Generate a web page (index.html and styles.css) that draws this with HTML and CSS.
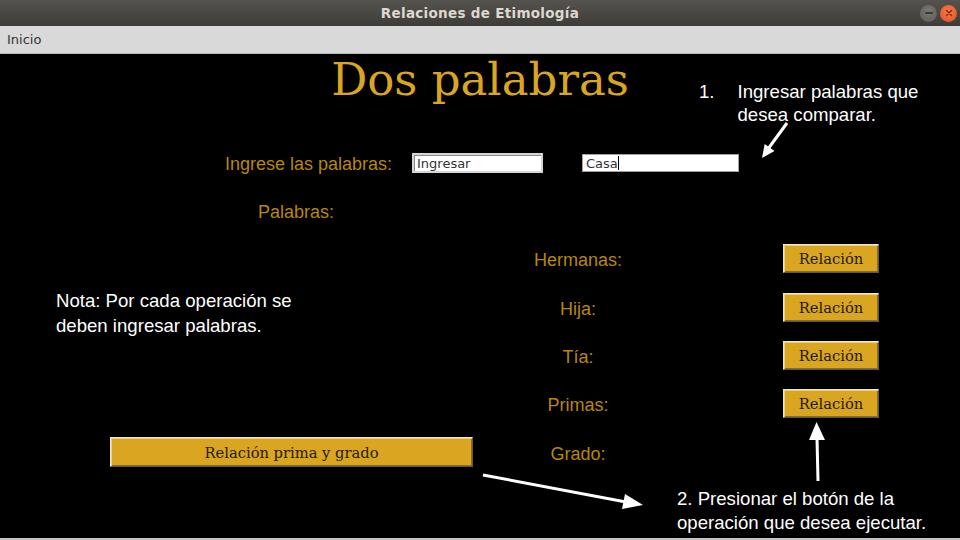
FILE: index.html
```html
<!DOCTYPE html>
<html lang="es">
<head>
<meta charset="utf-8">
<title>Relaciones de Etimología</title>
<link rel="stylesheet" href="styles.css">
</head>
<body>
<div class="window">
  <header class="titlebar">
    <span></span>
    <span class="win-title">Relaciones de Etimología</span>
    <div class="controls">
      <span class="ctl ctl-min"></span>
      <span class="ctl ctl-close">
        <svg width="8" height="8" viewBox="0 0 8 8"><path d="M1.5 1.5 L6.5 6.5 M6.5 1.5 L1.5 6.5" stroke="#8a2a0c" stroke-width="1.4" stroke-linecap="round"/></svg>
      </span>
    </div>
  </header>
  <nav class="menubar"><span class="menu-item">Inicio</span></nav>
  <main class="canvas">
    <h1 class="heading">Dos palabras</h1>
    <div class="entry-row">
      <span class="lbl-text">Ingrese las palabras:</span>
      <div class="entry entry-first">Ingresar</div>
      <div class="entry entry-second">Casa<span class="caret"></span></div>
    </div>
    <div class="words-row"><span class="lbl-text">Palabras:</span></div>
    <div class="rel-grid">
      <span class="lbl-text rel-lbl">Hermanas:</span>
      <button class="rel-btn">Relación</button>
      <span class="lbl-text rel-lbl">Hija:</span>
      <button class="rel-btn">Relación</button>
      <span class="lbl-text rel-lbl">Tía:</span>
      <button class="rel-btn">Relación</button>
      <span class="lbl-text rel-lbl">Primas:</span>
      <button class="rel-btn">Relación</button>
      <button class="big-btn">Relación prima y grado</button>
      <span class="lbl-text rel-lbl">Grado:</span>
    </div>

    <div class="note note-one">
      <span class="num">1.</span>
      <span class="note-body">Ingresar palabras que<br>desea comparar.</span>
    </div>
    <div class="note note-nota">Nota: Por cada operación se<br>deben ingresar palabras.</div>
    <div class="note note-two">2. Presionar el botón de la<br>operación que desea ejecutar.</div>

    <svg class="arrows" width="960" height="486" viewBox="0 54 960 486">
      <line x1="787" y1="123" x2="768" y2="149" stroke="#fff" stroke-width="3"/>
      <polygon points="762,158 774.5,150.9 764.7,143.9" fill="#fff"/>
      <line x1="818" y1="481" x2="817" y2="438" stroke="#fff" stroke-width="3"/>
      <polygon points="816.5,422 809,440 825,440" fill="#fff"/>
      <line x1="483" y1="475" x2="626" y2="502" stroke="#fff" stroke-width="3"/>
      <polygon points="643,505 622,509 625,494" fill="#fff"/>
    </svg>
  </main>
</div>
</body>
</html>
```

FILE: styles.css
```css
* { box-sizing: border-box; }

html, body {
  margin: 0;
  padding: 0;
  background: #000;
}

.window {
  width: 960px;
  height: 540px;
  overflow: hidden;
  display: flex;
  flex-direction: column;
}

.titlebar {
  height: 26px;
  flex: none;
  display: grid;
  grid-template-columns: 1fr auto 1fr;
  align-items: center;
  background: linear-gradient(#55534e, #3d3c38);
}

.win-title {
  font-family: "DejaVu Sans", sans-serif;
  font-weight: bold;
  font-size: 13.5px;
  color: #dcd8cf;
  letter-spacing: 0.3px;
}

.controls {
  justify-self: end;
  display: flex;
  gap: 3px;
  padding-right: 3px;
}

.ctl {
  width: 17px;
  height: 17px;
  border-radius: 50%;
  display: flex;
  align-items: center;
  justify-content: center;
}

.ctl-min {
  background: radial-gradient(circle at 50% 40%, #7a7974, #5b5a56);
}

.ctl-min::after {
  content: "";
  width: 8px;
  height: 2px;
  background: #3b3a37;
  border-radius: 1px;
}

.ctl-close {
  background: radial-gradient(circle at 50% 40%, #f47a4f, #e0501d);
}

.menubar {
  height: 28px;
  flex: none;
  background: #d9d9d9;
  border-bottom: 1px solid #bcbcbc;
  display: flex;
  align-items: center;
  padding-left: 7px;
}

.menu-item {
  font-family: "DejaVu Sans", sans-serif;
  font-size: 13px;
  color: #333;
}

.canvas {
  position: relative;
  height: 486px;
  background: #000;
  border-bottom: 2px solid #c4c4c4;
  display: flex;
  flex-direction: column;
}

.heading {
  margin: 0;
  padding-top: 1px;
  height: 52px;
  line-height: 50px;
  text-align: center;
  font-family: "DejaVu Serif", serif;
  font-weight: normal;
  font-size: 45px;
  color: #daa520;
}

.lbl-text {
  font-family: "Liberation Sans", Arial, sans-serif;
  font-size: 18px;
  color: #b8860b;
  line-height: 20px;
}

.entry-row {
  margin-top: 46px;
  height: 20px;
  display: grid;
  grid-template-columns: 187px 170px 157px;
  padding-left: 225px;
  align-items: center;
}

.entry-row .lbl-text {
  padding-top: 2px;
}

.entry {
  background: #fff;
  font-family: "DejaVu Sans", sans-serif;
  font-size: 13px;
  color: #333;
  display: flex;
  align-items: center;
  padding-left: 3px;
}

.entry-first {
  width: 131px;
  height: 20px;
  border: 2px solid #d4d4d4;
  box-shadow: inset 1px 1px 0 #8a8a8a;
}

.entry-second {
  width: 157px;
  height: 18px;
  border: 1px solid #a0a0a0;
}

.caret {
  width: 1px;
  height: 14px;
  background: #000;
}

.words-row {
  margin-top: 30px;
  height: 20px;
  padding-left: 258px;
}

.rel-grid {
  margin-top: 12.6px;
  display: grid;
  grid-template-columns: 362px 212px 99px 96px;
  grid-auto-rows: 48.4px;
  padding-left: 110px;
  align-items: center;
}

.rel-lbl {
  grid-column: 2;
  justify-self: center;
  padding-top: 3px;
}

.rel-btn,
.big-btn {
  margin: 0;
  padding: 0;
  background: #daa520;
  font-family: "DejaVu Serif", serif;
  font-size: 14.7px;
  color: #221c08;
  border: 1px solid;
  border-color: #e6e6e6 #5a5a5a #5a5a5a #e6e6e6;
  box-shadow: inset 1px 1px 0 #f1cf74, inset -1px -1px 0 #8e6c12;
}

.rel-btn {
  grid-column: 4;
  width: 96px;
  height: 29px;
}

.big-btn {
  grid-column: 1;
  width: 363px;
  height: 30px;
}

.note {
  position: absolute;
  font-family: "Liberation Sans", Arial, sans-serif;
  font-size: 18.6px;
  color: #fff;
}

.note-one {
  left: 699px;
  top: 26px;
  line-height: 23px;
  display: flex;
  gap: 23px;
}

.note-nota {
  left: 56px;
  top: 234px;
  line-height: 25px;
}

.note-two {
  left: 677px;
  top: 433px;
  line-height: 24px;
}

.arrows {
  position: absolute;
  left: 0;
  top: 0;
  width: 960px;
  height: 486px;
  pointer-events: none;
}
```
